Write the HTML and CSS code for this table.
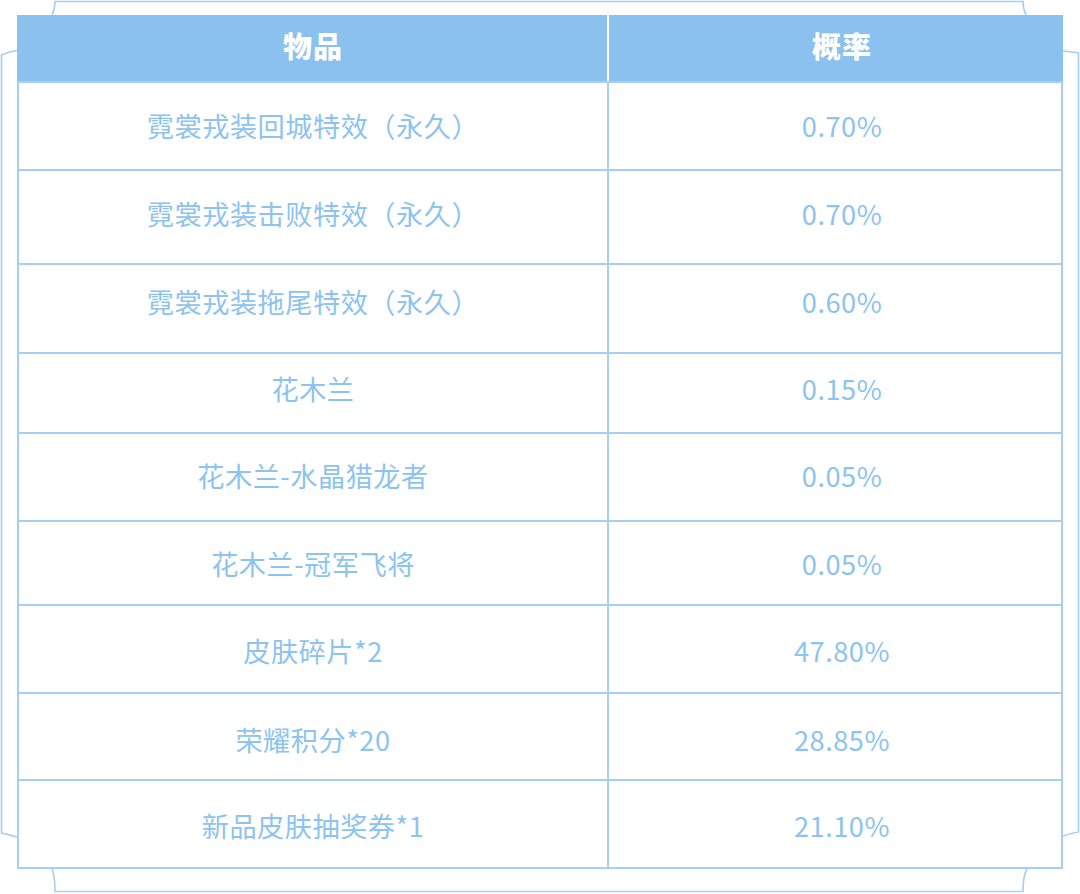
FILE: index.html
```html
<!DOCTYPE html>
<html lang="zh">
<head>
<meta charset="utf-8">
<link rel="stylesheet" href="styles.css">
</head>
<body>
<div class="page">
  <svg class="frame" width="1080" height="894" viewBox="0 0 1080 894" aria-hidden="true">
    <path d="M52 15 C54 11 55 6 55 1.5 L1023 1.5 C1023 6 1024 11 1026 15" />
    <path d="M17 50.5 C11 51.5 6 53 1.5 55 L1.5 833 C6 834 11 835.5 17 837" />
    <path d="M52 869 C54 874 55 880 55 891.5 L1023 891.5 C1023 880 1024 874 1027 869" />
    <path d="M1063 51 C1068 51.5 1073 52 1078.5 53 L1078.5 832 C1073 833 1068 834.5 1063 836" />
  </svg>
  <div class="table">
    <div class="head">
      <div class="hcell left">物品</div>
      <div class="hcell right">概率</div>
    </div>
    <div class="cell left r1">霓裳戎装回城特效（永久）</div><div class="cell right r1">0.70%</div>
    <div class="cell left r2">霓裳戎装击败特效（永久）</div><div class="cell right r2">0.70%</div>
    <div class="cell left r3">霓裳戎装拖尾特效（永久）</div><div class="cell right r3">0.60%</div>
    <div class="cell left r4">花木兰</div><div class="cell right r4">0.15%</div>
    <div class="cell left r5">花木兰-水晶猎龙者</div><div class="cell right r5">0.05%</div>
    <div class="cell left r6">花木兰-冠军飞将</div><div class="cell right r6">0.05%</div>
    <div class="cell left r7">皮肤碎片*2</div><div class="cell right r7">47.80%</div>
    <div class="cell left r8">荣耀积分*20</div><div class="cell right r8">28.85%</div>
    <div class="cell left r9">新品皮肤抽奖券*1</div><div class="cell right r9">21.10%</div>
  </div>
</div>
</body>
</html>
```

FILE: styles.css
```css
html, body {
  margin: 0;
  padding: 0;
  background: #ffffff;
}
.page {
  position: relative;
  width: 1080px;
  height: 894px;
  overflow: hidden;
  padding: 15px 0 0 17px;
  box-sizing: border-box;
}
.frame {
  position: absolute;
  left: 0;
  top: 0;
  pointer-events: none;
}
.frame path {
  fill: none;
  stroke: #a6cff2;
  stroke-width: 1.6;
}
.table {
  position: relative;
  width: 1046px;
  height: 854px;
  box-sizing: border-box;
  border: 2px solid #a6cff2;
  border-top-color: #8bc1ee;
  background: #a6cff2;
  display: grid;
  grid-template-columns: 588px 452px;
  grid-template-rows: 64px 86px 92px 87px 78px 86px 82px 86px 85px 86px;
  column-gap: 2px;
  row-gap: 2px;
  font-family: "Noto Sans CJK SC", "Noto Sans", sans-serif;
}
.head {
  grid-column: 1 / -1;
  display: grid;
  grid-template-columns: 588px 452px;
  column-gap: 2px;
  background: #ffffff;
  margin: -2px -2px 0 -2px;
  padding: 0 2px;
  background-clip: content-box;
}
.hcell {
  background: #8bc1ee;
  color: #ffffff;
  font-size: 29px;
  font-weight: 900;
  letter-spacing: 1px;
  display: flex;
  align-items: center;
  justify-content: center;
  padding-bottom: 6px;
}
.head .hcell.left {
  margin-left: -2px;
  padding-left: 2px;
}
.head .hcell.right {
  margin-right: -2px;
  padding-right: 2px;
}
.cell {
  background: #ffffff;
  color: #8dc3ef;
  font-size: 27.2px;
  letter-spacing: 0.5px;
  display: flex;
  align-items: center;
  justify-content: center;
}
.right {
  padding-left: 14px;
}
.r1 { padding-bottom: 2px; }
.r2 { padding-bottom: 8px; }
.r3 { padding-bottom: 16px; }
.r4 { padding-bottom: 10px; }
.r5 { padding-bottom: 4px; }
.r6 { padding-bottom: 0; }
.r7 { padding-top: 2px; }
.r8 { padding-top: 4px; }
.r9 { padding-top: 2px; }
```
